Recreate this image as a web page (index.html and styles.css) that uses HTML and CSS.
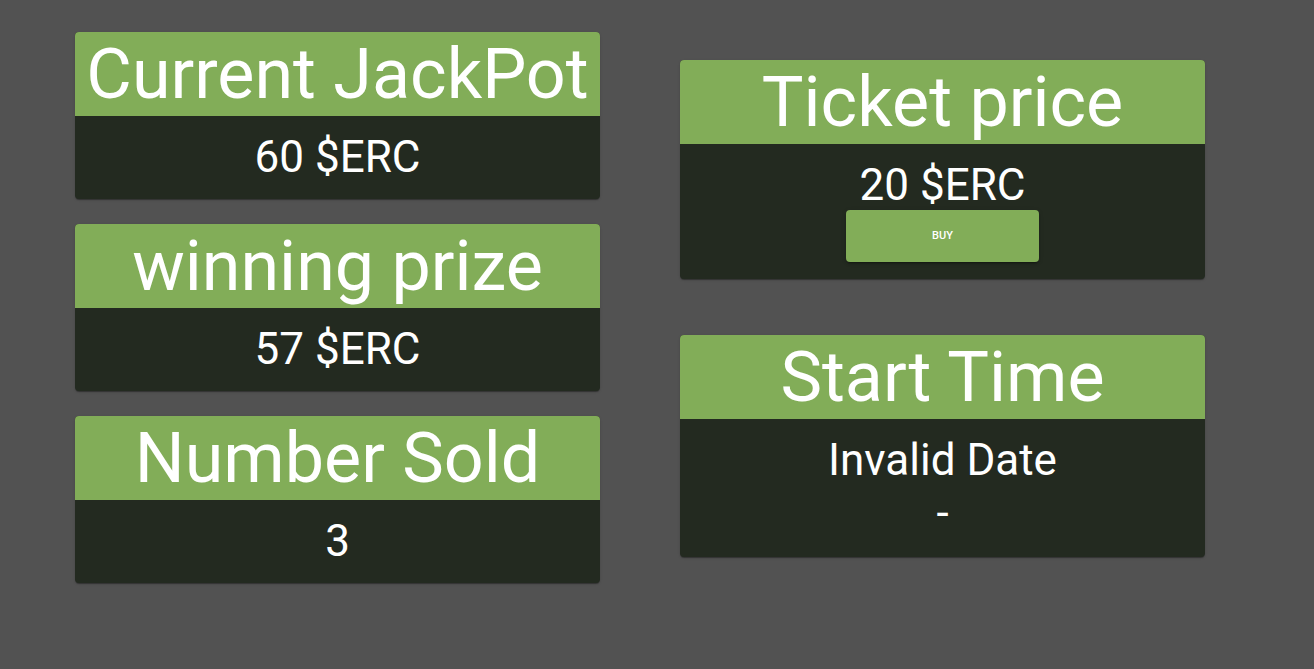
FILE: index.html
```html
<!DOCTYPE html>
<html lang="en">
<head>
<meta charset="utf-8">
<title>Lottery</title>
<link rel="stylesheet" href="styles.css">
</head>
<body>
<main class="board">
  <section class="column column-left">
    <div class="card">
      <div class="card-head">Current JackPot</div>
      <div class="card-body"><div class="line">60 $ERC</div></div>
    </div>
    <div class="card">
      <div class="card-head">winning prize</div>
      <div class="card-body"><div class="line">57 $ERC</div></div>
    </div>
    <div class="card">
      <div class="card-head">Number Sold</div>
      <div class="card-body"><div class="line">3</div></div>
    </div>
  </section>
  <section class="column column-right">
    <div class="card">
      <div class="card-head">Ticket price</div>
      <div class="card-body">
        <div class="line">20 $ERC</div>
        <button class="buy" type="button">BUY</button>
      </div>
    </div>
    <div class="card">
      <div class="card-head">Start Time</div>
      <div class="card-body">
        <div class="line">Invalid Date</div>
        <div class="line line-dash">-</div>
      </div>
    </div>
  </section>
</main>
</body>
</html>
```
FILE: styles.css
```css
* { box-sizing: border-box; }
html, body {
  margin: 0;
  padding: 0;
  background: #525252;
  height: 100%;
}
body {
  font-family: Roboto, "Liberation Sans", sans-serif;
  color: #ffffff;
}
.board {
  display: flex;
  gap: 80px;
  padding: 32px 0 0 75px;
}
.column {
  display: flex;
  flex-direction: column;
  width: 525px;
}
.column-left { gap: 25px; }
.column-right { gap: 56px; padding-top: 28px; }
.card {
  border-radius: 4px;
  overflow: hidden;
  background: #232a20;
  box-shadow: 0 2px 1px -1px rgba(0,0,0,0.2), 0 1px 1px 0 rgba(0,0,0,0.14), 0 1px 3px 0 rgba(0,0,0,0.12);
}
.card-head {
  background: #82ad58;
  height: 84px;
  line-height: 84px;
  font-size: 70px;
  text-align: center;
  white-space: nowrap;
}
.card-body {
  padding: 16px 0 17px;
  display: flex;
  flex-direction: column;
  align-items: center;
}
.line {
  height: 50px;
  line-height: 50px;
  font-size: 44px;
  text-align: center;
}
.line-dash { height: 52px; margin-top: 3px; }
.buy {
  width: 193px;
  height: 52px;
  border: 0;
  border-radius: 4px;
  background: #82ad58;
  color: #ffffff;
  font-family: Roboto, "Liberation Sans", sans-serif;
  font-size: 11px;
  font-weight: 500;
  line-height: 50px;
  box-shadow: 0 3px 1px -2px rgba(0,0,0,0.2), 0 2px 2px 0 rgba(0,0,0,0.14), 0 1px 5px 0 rgba(0,0,0,0.12);
  padding: 0;
}
```
